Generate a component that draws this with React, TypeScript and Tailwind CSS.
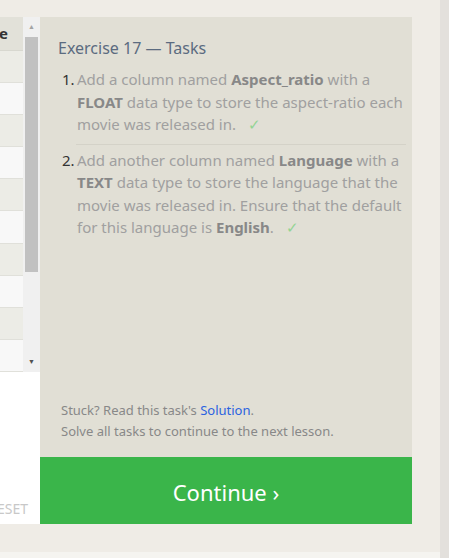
import { Fragment } from 'react';

const rows = [0, 1, 2, 3, 4, 5, 6, 7, 8, 9];

function Check() {
    return <span className="ml-[12px] text-[#93d493]">✓</span>;
}

export default function App() {
    return (
        <div className="flex w-[449px] h-[558px] bg-[#efece6] overflow-hidden font-['Noto_Sans',sans-serif]">
            <div className="flex flex-col w-[440px]">
                <div className="flex mt-[17px] h-[507px]">
                    {/* Table + scrollbar */}
                    <div className="flex flex-col w-[40px]">
                        <div className="flex h-[355px]">
                            <div className="flex flex-col w-[23px] overflow-hidden">
                                <div className="h-[34px] bg-[#e2e1d9] flex items-center border-b border-[#d8d8d0]">
                                    <span className="text-[15px] font-bold text-[#333] ml-[-1px]">e</span>
                                </div>
                                {rows.map((r) => (
                                    <Fragment key={r}>
                                        <div className={`flex-1 border-b border-[#e0e0da] ${r % 2 === 0 ? 'bg-[#ececE6]' : 'bg-[#f8f8f8]'}`} />
                                    </Fragment>
                                ))}
                            </div>
                            <div className="w-[17px] bg-[#f0f0f0] flex flex-col items-center">
                                <div className="h-[20px] flex items-center justify-center text-[#a3a3a3] text-[7px]">▲</div>
                                <div className="w-[13px] h-[235px] bg-[#c1c1c1]" />
                                <div className="flex-1" />
                                <div className="h-[20px] flex items-center justify-center text-[#505050] text-[7px]">▼</div>
                            </div>
                        </div>
                        <div className="flex-1 bg-white flex items-end justify-end overflow-hidden pb-[5px]">
                            <span className="text-[14px] text-[#c8c8c8] mr-[12px] whitespace-nowrap">RESET</span>
                        </div>
                    </div>

                    {/* Task panel */}
                    <div className="flex flex-col w-[372px] bg-[#e1dfd5]">
                        <div className="pl-[18px] pr-[6px] pt-[19px] flex-1">
                            <h2 className="text-[16px] text-[#5b6b80] leading-[24px]">Exercise 17 — Tasks</h2>
                            <ol className="mt-[8px] text-[15px] leading-[22.5px] text-[#a0a0a0]">
                                <li className="flex pb-[8px] border-b border-[#d4d2c8] ml-[18px]">
                                    <span className="w-[17px] shrink-0 text-[#333] -ml-[14px] mr-[-2px]">1.</span>
                                    <span>
                                        Add a column named <b className="text-[#888]">Aspect_ratio</b> with a <b className="text-[#888]">FLOAT</b> data type to store the aspect-ratio each movie was released in.
                                        <Check />
                                    </span>
                                </li>
                                <li className="flex pt-[4px] ml-[18px]">
                                    <span className="w-[17px] shrink-0 text-[#333] -ml-[14px] mr-[-2px]">2.</span>
                                    <span>
                                        Add another column named <b className="text-[#888]">Language</b> with a <b className="text-[#888]">TEXT</b> data type to store the language that the movie was released in. Ensure that the default for this language is <b className="text-[#888]">English</b>.
                                        <Check />
                                    </span>
                                </li>
                            </ol>
                        </div>
                        <div className="px-[21px] pb-[15px] text-[13px] leading-[21px] text-[#888]">
                            <p>Stuck? Read this task's <span className="text-[#2b63e0]">Solution</span>.</p>
                            <p>Solve all tasks to continue to the next lesson.</p>
                        </div>
                        <div className="h-[67px] bg-[#3ab54a] flex items-center justify-center pt-[3px] text-white text-[22px]">
                            Continue ›
                        </div>
                    </div>
                </div>
                <div className="flex-1" />
                <div className="h-[6px] bg-[#f5f4f0]" />
            </div>
            <div className="w-[9px] bg-[#e3e0dc]" />
        </div>
    );
}
